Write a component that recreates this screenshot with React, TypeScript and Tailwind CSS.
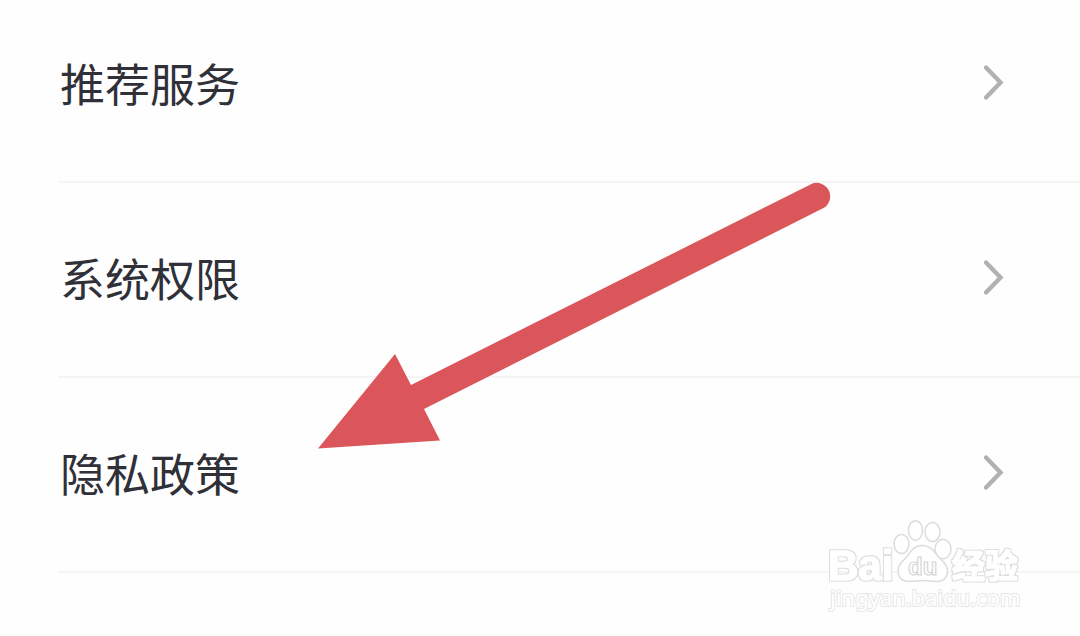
const items = [
  { label: "推荐服务", href: "#recommend" },
  { label: "系统权限", href: "#permissions" },
  { label: "隐私政策", href: "#privacy" },
];

function Chevron() {
  return (
    <svg className="mb-[2px] h-10 w-6 shrink-0" viewBox="0 0 24 40" fill="none" aria-hidden="true">
      <path d="M4 5.5 18.500 20.5 4 35.5" stroke="#b1b1b1" strokeWidth="4.400" strokeLinecap="round" strokeLinejoin="miter" />
    </svg>
  );
}

function Arrow() {
  return (
    <svg
      className="pointer-events-none absolute left-[318px] top-[182px] h-[268px] w-[514px]"
      viewBox="318 182 514 268"
      aria-hidden="true"
    >
      <path
        d="M318 448.500 395 354 411 385 811 184.200A13.300 13.300 0 0 1 822.500 208.500L424 409 440 440.500Z"
        fill="#db565b"
      />
    </svg>
  );
}

function Watermark() {
  return (
    <svg
      className="pointer-events-none absolute right-[54px] top-[516px] h-[104px] w-[202px]"
      viewBox="824 516 202 104"
      role="img"
      aria-label="Baidu 经验 jingyan.baidu.com"
    >
      <defs>
        <filter id="outline" x="-10%" y="-20%" width="120%" height="140%">
          <feMorphology in="SourceAlpha" operator="dilate" radius="1" result="wide" />
          <feFlood floodColor="#dedede" />
          <feComposite in2="wide" operator="in" result="ring" />
          <feMerge>
            <feMergeNode in="ring" />
            <feMergeNode in="SourceGraphic" />
          </feMerge>
        </filter>
      </defs>
      <g fill="#ffffff" stroke="#ffffff" strokeWidth="1.500" strokeLinejoin="round" filter="url(#outline)">
        <text x="828" y="580" fontFamily="'Liberation Sans', sans-serif" fontWeight="700" fontSize="42">
          Bai
        </text>
        <text x="952" y="578" fontFamily="'Noto Sans CJK SC', sans-serif" fontWeight="700" fontSize="33">
          经验
        </text>
      </g>
      <g fill="#ffffff" stroke="#dcdcdc" strokeWidth="1.500">
        <ellipse cx="901.500" cy="544" rx="7.500" ry="9.500" />
        <ellipse cx="915.500" cy="530.500" rx="7" ry="9.700" />
        <ellipse cx="932.500" cy="532" rx="7.500" ry="9.500" />
        <ellipse cx="943" cy="549" rx="8" ry="9.700" />
        <path d="M922 545.500C914 545.500 911 551 907 556.500C903 561 898 564 898 571C898 577 902 581.500 909 581.500C914 581.500 917 580.500 923 580.500C929 580.500 932 581.500 937 581.500C944 581.500 947.500 577 947.500 571C947.500 564 942 561 938 556.500C934 551 930 545.500 922 545.500Z" />
      </g>
      <text
        x="908"
        y="575"
        fontFamily="'Liberation Sans', sans-serif"
        fontWeight="700"
        fontSize="24"
        fill="#ffffff"
        stroke="#d6d6d6"
        strokeWidth="1.200"
      >
        du
      </text>
      <text
        x="830"
        y="606"
        fontFamily="'Noto Sans', sans-serif"
        fontSize="22"
        fill="#ffffff"
        stroke="#e8e8e8"
        strokeWidth="2"
        paintOrder="stroke"
      >
        jingyan.baidu.com
      </text>
    </svg>
  );
}

export default function App() {
  return (
    <main className="relative min-h-screen overflow-hidden bg-[#fefefe] font-['Noto_Sans_CJK_SC',sans-serif] text-[#303038]">
      <ul>
        {items.map((item) => (
          <li key={item.href} className="group">
            <a
              href={item.href}
              className="ml-[58px] flex items-center justify-between border-b-2 border-[#f5f5f5] pt-[65px] pr-[74px] pb-[68px] pl-[2px] group-first:pt-[53px]"
            >
              <span className="text-[45px] leading-[60px]">{item.label}</span>
              <Chevron />
            </a>
          </li>
        ))}
      </ul>
      <Arrow />
      <Watermark />
    </main>
  );
}
